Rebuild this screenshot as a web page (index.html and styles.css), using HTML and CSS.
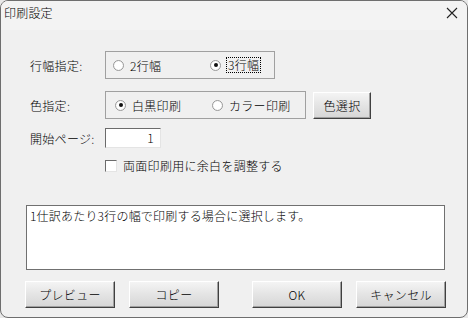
FILE: index.html
```
<!DOCTYPE html>
<html lang="ja">
<head>
  <meta charset="UTF-8" />
  <title>印刷設定</title>
  <link rel="stylesheet" href="styles.css">
</head>
<body>
  <div class="window">
    <div class="titlebar">
      <span class="title">印刷設定</span>
      <svg class="close" width="12" height="12" viewBox="0 0 12 12">
        <path d="M1 1 L11 11 M11 1 L1 11" stroke="#222" stroke-width="1.1" fill="none" />
      </svg>
    </div>

    <div class="content">
      <div class="row row-width">
        <span class="label">行幅指定:</span>
        <div class="group group-width">
          <label class="radio"><span class="dot"></span>2行幅</label>
          <label class="radio radio-second"><span class="dot on"></span><span class="focus">3行幅</span></label>
        </div>
      </div>

      <div class="row row-color">
        <span class="label">色指定:</span>
        <div class="group group-color">
          <label class="radio"><span class="dot on"></span>白黒印刷</label>
          <label class="radio radio-second"><span class="dot"></span>カラー印刷</label>
        </div>
        <button class="btn btn-color">色選択</button>
      </div>

      <div class="row row-page">
        <span class="label">開始ページ:</span>
        <div class="input">1</div>
      </div>

      <div class="row row-check">
        <span class="label"></span>
        <label class="check"><span class="box"></span>両面印刷用に余白を調整する</label>
      </div>

      <div class="memo">1仕訳あたり3行の幅で印刷する場合に選択します。</div>

      <div class="buttons">
        <button class="btn">プレビュー</button>
        <button class="btn btn-copy">コピー</button>
        <button class="btn btn-ok">OK</button>
        <button class="btn btn-cancel">キャンセル</button>
      </div>
    </div>
  </div>
</body>
</html>
```

FILE: styles.css
```
html {
  background: #e8e8e8;
}

body {
  margin: 0;
  font-family: "Noto Sans CJK JP", "Liberation Sans", sans-serif;
  font-size: 12px;
  font-weight: 300;
  line-height: 15px;
  color: #000;
}

.window {
  width: 468px;
  height: 318px;
  box-sizing: border-box;
  background: #f0f0f0;
  border: 1px solid #6e6e6e;
  border-radius: 8px;
  overflow: hidden;
}

.titlebar {
  height: 29px;
  box-sizing: border-box;
  display: flex;
  align-items: center;
  justify-content: space-between;
  padding: 0 9px 6px 3px;
  background: #f3f3f3;
}

.title {
  letter-spacing: 0.2px;
}

.content {
  padding: 21px 0 0 29px;
}

.row {
  display: flex;
  align-items: center;
  letter-spacing: 0.3px;
}

.label {
  width: 75px;
  flex: none;
}

.group {
  height: 28px;
  box-sizing: border-box;
  border: 1px solid #a0a0a0;
  display: flex;
  align-items: center;
}

.group-width {
  width: 170px;
  padding-left: 7px;
}

.group-color {
  width: 201px;
  padding-left: 9px;
}

.row-color {
  margin-top: 12px;
}

.radio {
  display: flex;
  align-items: center;
  flex: none;
}

.radio:first-child {
  width: 97px;
}

.dot {
  width: 9px;
  height: 9px;
  border-radius: 50%;
  border: 1px solid #9a9a9a;
  background: radial-gradient(circle, #fff 55%, #e6e6e6);
  margin-right: 6px;
  position: relative;
}

.dot.on::after {
  content: "";
  position: absolute;
  left: 2.5px;
  top: 2.5px;
  width: 4px;
  height: 4px;
  border-radius: 50%;
  background: #111;
}

.focus {
  outline: 1px dotted #000;
  outline-offset: 0;
  line-height: 14px;
  padding: 0 1px;
}

.btn {
  font-family: inherit;
  font-size: 12px;
  font-weight: 300;
  letter-spacing: 0.3px;
  height: 27px;
  width: 90px;
  box-sizing: border-box;
  background: linear-gradient(#f4f4f4, #e4e4e4 50%, #d6d6d6);
  border: 1px solid;
  border-color: #fff #404040 #404040 #fff;
  box-shadow: inset -1px -1px 0 #a0a0a0;
  padding: 0;
  color: #000;
}

.btn-color {
  width: 58px;
  margin-left: 7px;
}

.row-page {
  margin-top: 9px;
}

.input {
  width: 56px;
  height: 20px;
  box-sizing: border-box;
  background: #fff;
  border: 1px solid;
  border-color: #6b6b6b #e4e4e4 #e4e4e4 #6b6b6b;
  text-align: right;
  padding-right: 6px;
  line-height: 17px;
}

.row-check {
  margin-top: 10px;
}

.check {
  display: flex;
  align-items: center;
}

.box {
  width: 10px;
  height: 10px;
  background: #fff;
  border: 1px solid;
  border-color: #6b6b6b #e4e4e4 #e4e4e4 #6b6b6b;
  margin-right: 6px;
}

.memo {
  margin: 32px 0 0 -4px;
  width: 419px;
  height: 65px;
  box-sizing: border-box;
  background: #fff;
  border: 1px solid #707070;
  padding: 2px 3px;
  letter-spacing: 0.2px;
}

.buttons {
  display: flex;
  margin: 11px 0 0 -5px;
}

.btn-copy {
  margin-left: 14px;
}

.btn-ok {
  margin-left: 33px;
}

.btn-cancel {
  margin-left: 14px;
}
```
